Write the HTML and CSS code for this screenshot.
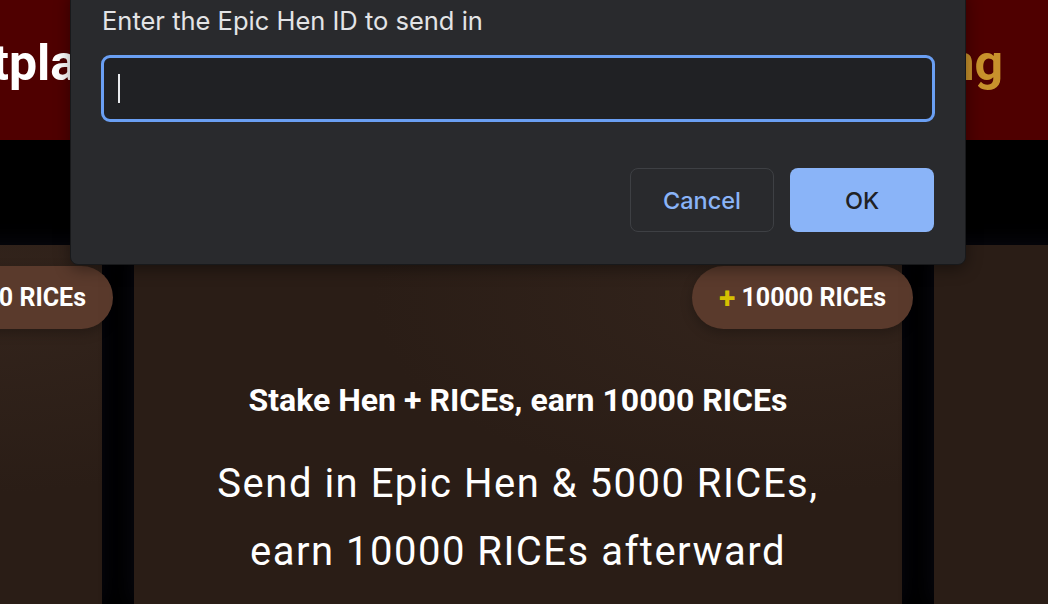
FILE: index.html
```html
<!DOCTYPE html>
<html>
<head>
    <title>Hen Staking</title>
    <link rel="stylesheet" href="styles.css">
</head>
<body>
    <header class="top-bar">
        <span class="brand">Marketplace</span>
        <span class="brand gold">Staking</span>
    </header>
    <div class="band"></div>

    <main class="cards">
        <div class="card">
            <div class="pill"><span class="plus">+</span> 5000 RICEs</div>
            <h2>Stake Hen, earn 5000 RICEs</h2>
            <p>Send in Rare Hen,<br>earn 5000 RICEs afterward</p>
        </div>
        <div class="card">
            <div class="pill"><span class="plus">+</span> 10000 RICEs</div>
            <h2>Stake Hen + RICEs, earn 10000 RICEs</h2>
            <p>Send in Epic Hen &amp; 5000 RICEs,<br>earn 10000 RICEs afterward</p>
        </div>
        <div class="card">
            <div class="pill"><span class="plus">+</span> 20000 RICEs</div>
            <h2>Stake Hen + RICEs, earn 20000 RICEs</h2>
            <p>Send in Legendary Hen,<br>earn 20000 RICEs afterward</p>
        </div>
    </main>

    <div class="prompt">
        <label for="henId">Enter the Epic Hen ID to send in</label>
        <div class="prompt-input"><span class="caret"></span></div>
        <div class="prompt-actions">
            <button class="btn-cancel">Cancel</button>
            <button class="btn-ok">OK</button>
        </div>
    </div>
</body>
</html>
```

FILE: styles.css
```css
* {
    margin: 0;
    padding: 0;
    box-sizing: border-box;
}

body {
    background: #000;
    font-family: 'Roboto', sans-serif;
    overflow: hidden;
    height: 604px;
}

.top-bar {
    height: 140px;
    background: #4f0000;
    display: flex;
    justify-content: space-between;
    align-items: center;
    padding-bottom: 14px;
    overflow: hidden;
}

.brand {
    color: #fff;
    font-size: 50px;
    font-weight: 700;
    margin-left: -150px;
}

.brand.gold {
    color: #c8922c;
    margin-left: 0;
    margin-right: 45px;
}

.band {
    height: 105px;
}

.cards {
    display: flex;
    justify-content: center;
    gap: 32px;
    padding-right: 12px;
}

.card {
    position: relative;
    flex: 0 0 768px;
    height: 359px;
    background: radial-gradient(ellipse at 85% 15%, #33241c 0%, #2a1d16 45%, #2a1d16 100%);
    box-shadow: 0 0 24px rgba(20, 20, 40, 0.5);
    text-align: center;
    color: #fff;
    padding-top: 135px;
}

.pill {
    position: absolute;
    top: 21px;
    right: -11px;
    height: 63px;
    padding: 0 27px;
    border-radius: 32px;
    background: #5a3a2c;
    display: flex;
    align-items: center;
    gap: 6px;
    font-size: 25px;
    font-weight: 700;
    box-shadow: 0 4px 12px rgba(0, 0, 0, 0.25);
}

.plus {
    color: #d6c000;
    font-size: 30px;
}

.card h2 {
    font-size: 32px;
    font-weight: 700;
    line-height: 40px;
}

.card p {
    margin-top: 30px;
    font-size: 40px;
    line-height: 68px;
    letter-spacing: 1.5px;
}

/* browser prompt */
.prompt {
    position: absolute;
    top: -10px;
    left: 70px;
    width: 896px;
    height: 275px;
    background: #292a2d;
    border: 1px solid #18191b;
    border-radius: 8px;
    padding: 15px 30px 0 30px;
    font-family: 'Inter', 'Roboto', sans-serif;
    box-shadow: 0 4px 16px rgba(0, 0, 0, 0.4);
}

.prompt label {
    display: block;
    color: #e3e4e6;
    font-size: 25.5px;
    line-height: 30px;
    padding-left: 1px;
}

.prompt-input {
    margin-top: 19px;
    height: 67px;
    border: 3px solid #6a9ff3;
    border-radius: 9px;
    background: #202124;
    padding: 16px 14px;
}

.caret {
    display: block;
    width: 2px;
    height: 29px;
    background: #e8eaed;
}

.prompt-actions {
    display: flex;
    justify-content: flex-end;
    gap: 16px;
    margin-top: 46px;
    padding-right: 1px;
}

.prompt-actions button {
    width: 144px;
    height: 64px;
    border-radius: 8px;
    font-family: 'Inter', 'Roboto', sans-serif;
    font-size: 23.5px;
    font-weight: 500;
}

.btn-cancel {
    background: transparent;
    border: 1px solid #3e4044;
    color: #8ab4f8;
}

.btn-ok {
    background: #8ab4f8;
    border: none;
    color: #202124;
}
```
